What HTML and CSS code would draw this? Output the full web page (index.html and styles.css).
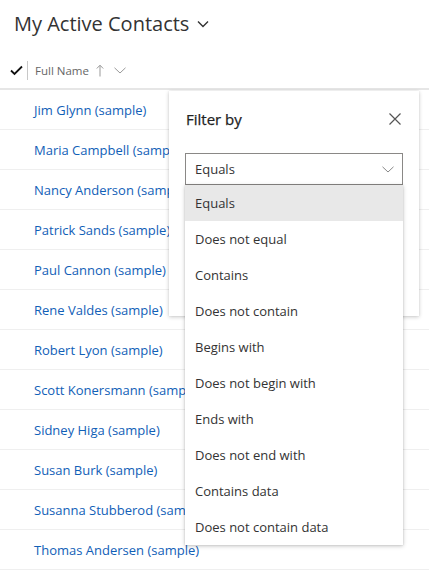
FILE: index.html
```html
<!DOCTYPE html>
<html>
<head>
<meta charset="utf-8">
<link rel="stylesheet" href="styles.css">
</head>
<body>
<div class="page">
  <div class="title">
    <span class="title-text">My Active Contacts</span>
    <svg class="title-chev" width="12" height="8" viewBox="0 0 12 8"><path d="M1 1.5 L6 6.5 L11 1.5" fill="none" stroke="#333" stroke-width="1.4"/></svg>
  </div>
  <div class="header">
    <svg class="check" width="13" height="11" viewBox="0 0 13 11"><path d="M1 5.5 L4.5 9 L12 1.5" fill="none" stroke="#111" stroke-width="1.8"/></svg>
    <span class="sep"></span>
    <span class="col-name">Full Name</span>
    <svg class="arrow-up" width="8" height="13" viewBox="0 0 8 13"><path d="M4 12.5 V1.5 M0.8 4.5 L4 1.2 L7.2 4.5" fill="none" stroke="#999" stroke-width="1"/></svg>
    <svg class="col-chev" width="12" height="7" viewBox="0 0 12 7"><path d="M0.5 0.8 L6 6 L11.5 0.8" fill="none" stroke="#999" stroke-width="1"/></svg>
  </div>
  <div class="rows">
    <div class="row"><a>Jim Glynn (sample)</a></div>
    <div class="row"><a>Maria Campbell (sample)</a></div>
    <div class="row"><a>Nancy Anderson (sample)</a></div>
    <div class="row"><a>Patrick Sands (sample)</a></div>
    <div class="row"><a>Paul Cannon (sample)</a></div>
    <div class="row"><a>Rene Valdes (sample)</a></div>
    <div class="row"><a>Robert Lyon (sample)</a></div>
    <div class="row"><a>Scott Konersmann (sample)</a></div>
    <div class="row"><a>Sidney Higa (sample)</a></div>
    <div class="row"><a>Susan Burk (sample)</a></div>
    <div class="row"><a>Susanna Stubberod (sample)</a></div>
    <div class="row"><a>Thomas Andersen (sample)</a></div>
  </div>

  <div class="filter">
    <div class="filter-head">
      <span class="filter-title">Filter by</span>
      <svg class="close" width="12" height="12" viewBox="0 0 12 12"><path d="M0.5 0.5 L11.5 11.5 M11.5 0.5 L0.5 11.5" fill="none" stroke="#555" stroke-width="1.2"/></svg>
    </div>
    <div class="select">
      <span>Equals</span>
      <svg class="sel-chev" width="12" height="7" viewBox="0 0 12 7"><path d="M0.5 0.8 L6 6 L11.5 0.8" fill="none" stroke="#888" stroke-width="1"/></svg>
    </div>
  </div>

  <ul class="options">
    <li class="active">Equals</li>
    <li>Does not equal</li>
    <li>Contains</li>
    <li>Does not contain</li>
    <li>Begins with</li>
    <li>Does not begin with</li>
    <li>Ends with</li>
    <li>Does not end with</li>
    <li>Contains data</li>
    <li>Does not contain data</li>
  </ul>
</div>
</body>
</html>
```

FILE: styles.css
```css
* { box-sizing: border-box; }
html, body { margin: 0; padding: 0; background: #fff; }
body {
  font-family: "Open Sans", "Noto Sans", "Liberation Sans", sans-serif;
  color: #323130;
  width: 429px;
  height: 572px;
  overflow: hidden;
}
.page { position: relative; width: 429px; height: 572px; }

.title {
  display: flex;
  align-items: center;
  height: 46px;
  padding-left: 14px;
}
.title-text {
  font-size: 20px;
  color: #333;
}
.title-chev { margin-left: 8px; margin-top: 2px; }

.header {
  display: flex;
  align-items: center;
  height: 44px;
  padding-left: 10px;
  padding-top: 6px;
  border-bottom: 2px solid #e6e6e6;
}
.check { margin-top: 0; }
.sep {
  width: 1px;
  height: 19px;
  background: #c8c8c8;
  margin-left: 4px;
  margin-right: 7px;
}
.col-name { font-size: 11.5px; color: #666; }
.arrow-up { margin-left: 7px; }
.col-chev { margin-left: 10px; margin-top: 1px; }

.rows { display: flex; flex-direction: column; }
.row {
  height: 40px;
  display: flex;
  align-items: center;
  padding-left: 34px;
  padding-top: 1px;
  border-bottom: 1px solid #efefef;
}
.row a {
  font-size: 13px;
  color: #1160b7;
  white-space: nowrap;
}

.filter {
  position: absolute;
  left: 169px;
  top: 91px;
  width: 250px;
  height: 225px;
  background: #fff;
  box-shadow: 0 1px 4px rgba(0,0,0,0.22), 0 0 1px rgba(0,0,0,0.1);
  padding: 0 16px;
}
.filter-head {
  display: flex;
  align-items: center;
  justify-content: space-between;
  height: 56px;
  padding-left: 1px;
  padding-right: 2px;
}
.filter-title { font-size: 15px; color: #222; font-weight: 400; -webkit-text-stroke: 0.25px #222; }
.select {
  margin-top: 6px;
  height: 32px;
  border: 1px solid #8a8886;
  display: flex;
  align-items: center;
  justify-content: space-between;
  padding: 0 8px 0 9px;
  font-size: 13px;
  color: #333;
}

.options {
  position: absolute;
  left: 185px;
  top: 185px;
  width: 218px;
  margin: 0;
  padding: 0;
  list-style: none;
  background: #fff;
  box-shadow: 0 1px 4px rgba(0,0,0,0.25), 0 0 1px rgba(0,0,0,0.15);
}
.options li {
  height: 36px;
  display: flex;
  align-items: center;
  padding-left: 10px;
  font-size: 13px;
  color: #333;
}
.options li.active { background: #e8e8e8; }
```
